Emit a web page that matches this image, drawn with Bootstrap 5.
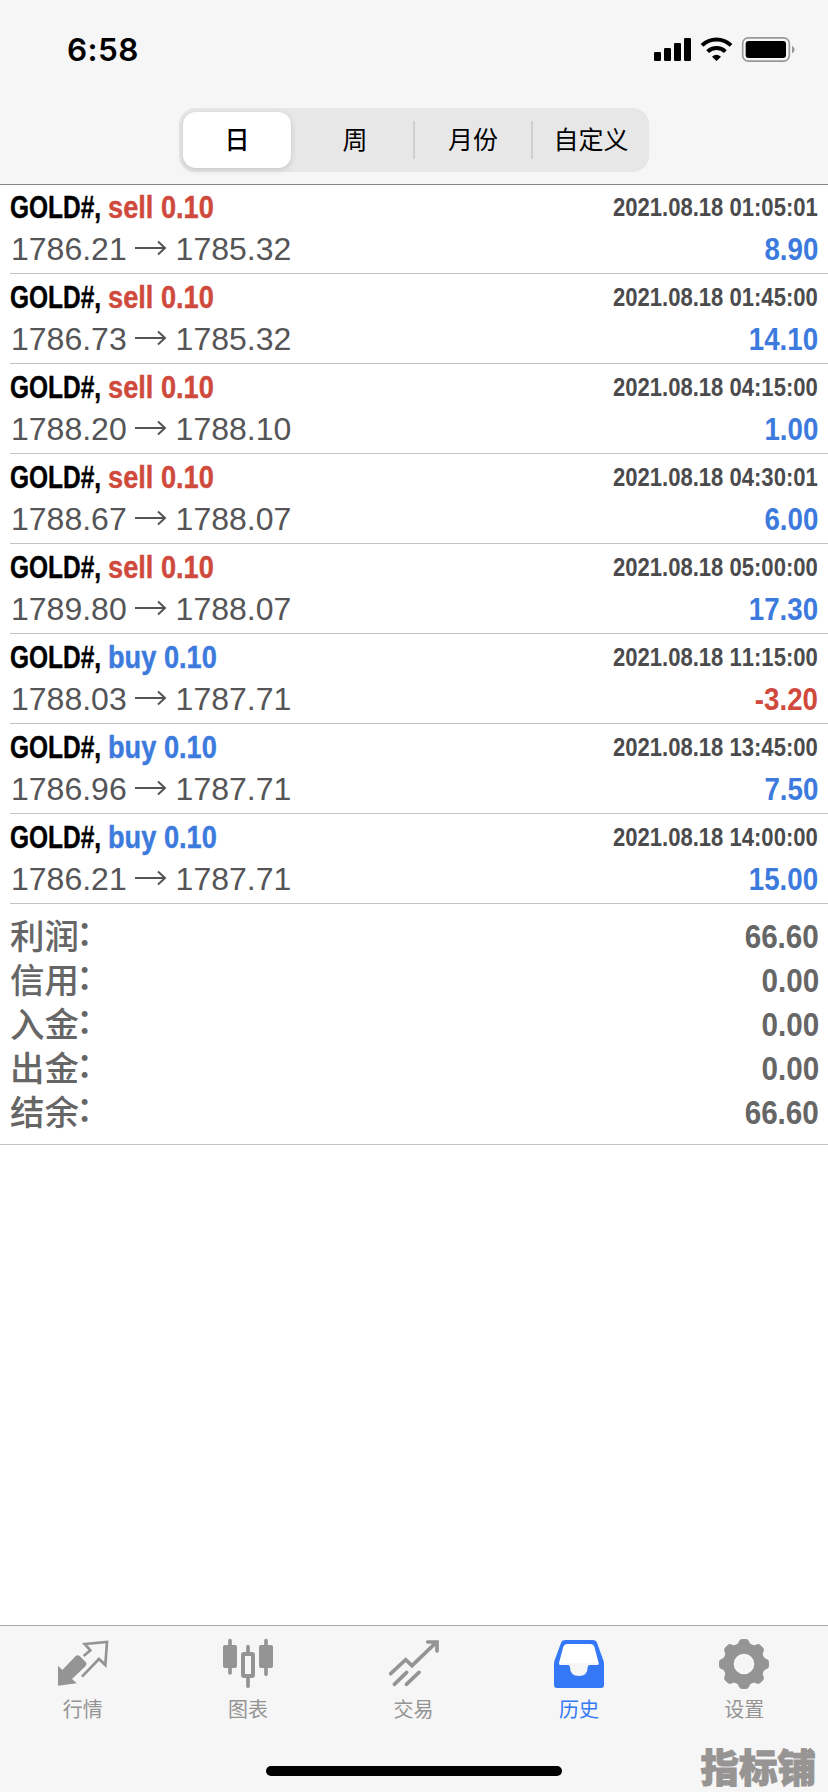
<!DOCTYPE html>
<html lang="zh-CN">
<head>
<meta charset="utf-8">
<meta name="viewport" content="width=device-width, initial-scale=1">
<title>历史</title>
<link href="https://cdn.jsdelivr.net/npm/bootstrap@5.3.0/dist/css/bootstrap.min.css" rel="stylesheet">
<style>
  body { font-family: "Liberation Sans", "Noto Sans CJK SC", sans-serif; height: 1792px; background: #fff; color: #000; overflow: hidden; }
  .bar-bg { background: #f6f6f6; }
  .top-area { height: 185px; border-bottom: 1px solid #858585; }
  .status-row { height: 108px; padding: 0 34px 0 67px; }
  .clock { font: 600 31.5px/40px Inter, sans-serif; margin-top: 30px; letter-spacing: .4px; }
  .status-icons { margin-top: 35px; width: 146px; height: 30px; }
  .seg { width: 470px; height: 64px; border-radius: 16px; background: #e7e7e8; }
  .seg-item { width: 118px; font: 400 25px/61px "Noto Sans CJK SC", sans-serif; color: #000; }
  .seg-item:last-child { width: 116px; }
  .seg-item.active { width: 108px; height: 56px; margin: 4px 6px 4px 4px; line-height: 53px; border-radius: 13px; background: #fff; font-weight: 500; box-shadow: 0 2px 6px rgba(0,0,0,.14); }
  .seg-item.divided { border-right: 2px solid transparent; border-image: linear-gradient(transparent 14px, #d0d0d2 14px, #d0d0d2 50px, transparent 50px) 1; }
  .deal { height: 90px; margin-left: 10px; padding-right: 10px; padding-top: 1px; border-bottom: 1px solid #c3c3c5; }
  .deal:first-child { height: 89px; padding-top: 0; }
  .line-one { height: 43px; padding-top: 1px; }
  .line-two { height: 41px; }
  .nw { display: inline-block; white-space: pre; transform-origin: 0 50%; }
  .nw-end { transform-origin: 100% 50%; }
  .title-txt { font: 700 32px/43px "Liberation Sans", sans-serif; -webkit-text-stroke: .4px currentColor; }
  .sym { width: 98px; }
  .sym .nw { transform: scaleX(.765); }
  .side .nw { transform: scaleX(.85); }
  .stamp { font: 700 25.5px/43px "Liberation Sans", sans-serif; color: #4b4b4d; transform: scaleX(.865); font-kerning: none; }
  .price { font: 400 32px/42px "Liberation Sans", sans-serif; color: #555557; font-kerning: none; padding-left: 1px; }
  .price span { width: 115.6px; }
  .gain { font: 700 32px/42px "Liberation Sans", sans-serif; transform: scaleX(.865); }
  .c-blue { color: #3c7add; }
  .c-red { color: #cf4a3c; }
  .totals { height: 241px; padding: 8px 9px 0 10px; border-bottom: 1px solid #c3c3c5; color: #666; }
  .totals .sum-row { height: 44px; }
  .sum-label { font: 500 34.5px/44px "Noto Sans CJK SC", sans-serif; }
  .sum-colon { display: inline-block; transform: translate(-3px, -4px); }
  .sum-val { font: 700 33.5px/49px "Liberation Sans", sans-serif; transform: scaleX(.885); }
  .tabs-area { height: 167px; border-top: 1px solid #a9a9a9; }
  .tab-strip { padding-right: 1px; }
  .tab-link { color: #949494; font: 400 20px/28px "Noto Sans CJK SC", sans-serif; padding-top: 11px; text-decoration: none; }
  .tab-link.active { color: #3478f6; }
  .tab-link svg { width: 54px; height: 54px; margin-bottom: 4px; }
  .home-pill { width: 296px; height: 10px; border-radius: 5px; background: #000; left: 266px; top: 140px; }
  .brand-mark { right: 12px; top: 114px; font: 900 38.5px/50px "Noto Sans CJK SC", sans-serif; color: #979494; -webkit-text-stroke: 1px #979494; }
</style>
</head>
<body class="d-flex flex-column">
<header class="top-area bar-bg flex-shrink-0">
  <div class="status-row d-flex justify-content-between align-items-start">
    <div class="clock">6:58</div>
    <svg class="status-icons" viewBox="699 105 438 90" overflow="visible" aria-hidden="true">
      <g><rect x="717" y="156" width="21" height="27" rx="4"/><rect x="747" y="144" width="21" height="39" rx="4"/><rect x="777" y="129" width="21" height="54" rx="4"/><rect x="807" y="114" width="21" height="69" rx="4"/></g>
      <g fill="none" stroke="#000" stroke-width="12"><path d="M861 136a62 62 0 0 1 87 0"/><path d="M878 155a38 38 0 0 1 53 0"/></g>
      <path d="M891 170q13-12 27 0l-13.500 13z"/>
      <rect x="983" y="113.500" width="140" height="70" rx="17" fill="none" stroke="#999" stroke-width="5"/>
      <rect x="992" y="123" width="121" height="51" rx="9"/>
      <path d="M1131 137q8 4 8 11.500t-8 11.500z" fill="#999"/>
    </svg>
  </div>
  <div class="seg d-flex mx-auto text-center">
    <div class="seg-item active">日</div>
    <div class="seg-item divided">周</div>
    <div class="seg-item divided">月份</div>
    <div class="seg-item">自定义</div>
  </div>
</header>

<main class="flex-grow-1">
  <div class="deals" id="deals"></div>
  <section class="totals" id="totals"></section>
</main>

<footer class="tabs-area bar-bg flex-shrink-0 position-relative">
  <nav class="tab-strip d-flex text-center">
    <a class="tab-link flex-fill w-100 d-flex flex-column align-items-center">
      <svg viewBox="75 81 162 162"><path d="M81 167L94 180L134 138Q140 133 146 138L165 157Q169 162 164 168L123 207L137 220L81 227z" fill="currentColor"/><path d="M158 138L178 121L161 102L228 96L223 165L204 147L153 200" fill="none" stroke="currentColor" stroke-width="8"/></svg>行情</a>
    <a class="tab-link flex-fill w-100 d-flex flex-column align-items-center">
      <svg viewBox="573 81 162 162" fill="none" stroke="currentColor" stroke-linecap="round"><path d="M600 92v97M708 92v101M654 110v20M654 200v29" stroke-width="11"/><rect x="579" y="105" width="42" height="69" rx="6" fill="currentColor" stroke="none"/><rect x="687" y="105" width="42" height="69" rx="6" fill="currentColor" stroke="none"/><rect x="639" y="132" width="30" height="66" rx="3" stroke-width="12"/></svg>图表</a>
    <a class="tab-link flex-fill w-100 d-flex flex-column align-items-center">
      <svg viewBox="79 81 162 162" fill="none" stroke="currentColor" stroke-width="11" stroke-linecap="round"><path d="M90 191L135 149L154 167L226 98M101 223L138 187M137 223L175 187"/><path d="M201 96h28v27"/></svg>交易</a>
    <a class="tab-link active flex-fill w-100 d-flex flex-column align-items-center">
      <svg viewBox="573 81 162 162"><path d="M606 98H700L718 160H590z" fill="#fff"/><path fill-rule="evenodd" fill="currentColor" d="M613 90H695Q705 90 708 98L727 151Q729 156 729 162V225Q729 234 720 234H588Q579 234 579 225V162Q579 156 581 151L600 98Q603 90 613 90zM618 102Q610 102 607 110L594 159Q593 165 598 165H620Q627 165 627 172Q627 198 654 198Q680 198 680 172Q680 165 687 165H709Q715 165 713 159L700 110Q697 102 689 102z"/></svg>历史</a>
    <a class="tab-link flex-fill w-100 d-flex flex-column align-items-center">
      <svg viewBox="171 81 162 162"><g fill="currentColor"><circle cx="252" cy="162" r="47" fill="none" stroke="currentColor" stroke-width="32"/><g id="teeth"></g></g></svg>设置</a>
  </nav>
  <div class="home-pill position-absolute"></div>
  <div class="brand-mark position-absolute">指标铺</div>
</footer>

<script>
  const deals = [
    ['sell', '1786.21', '1785.32', '01:05:01', '8.90'],
    ['sell', '1786.73', '1785.32', '01:45:00', '14.10'],
    ['sell', '1788.20', '1788.10', '04:15:00', '1.00'],
    ['sell', '1788.67', '1788.07', '04:30:01', '6.00'],
    ['sell', '1789.80', '1788.07', '05:00:00', '17.30'],
    ['buy', '1788.03', '1787.71', '11:15:00', '-3.20'],
    ['buy', '1786.96', '1787.71', '13:45:00', '7.50'],
    ['buy', '1786.21', '1787.71', '14:00:00', '15.00']
  ];
  document.getElementById('deals').innerHTML = deals.map(([side, open, close, time, gain]) => `
    <div class="deal">
      <div class="line-one d-flex justify-content-between">
        <div class="title-txt d-flex"><div class="sym"><span class="nw">GOLD#,</span></div><div class="side ${side === 'sell' ? 'c-red' : 'c-blue'}"><span class="nw">${side} 0.10</span></div></div>
        <div class="nw nw-end stamp">2021.08.18 ${time}</div>
      </div>
      <div class="line-two d-flex justify-content-between">
        <div class="price d-flex align-items-center"><span>${open}</span>
          <svg width="49" height="20" viewBox="0 0 49 20" fill="none" stroke="currentColor" stroke-width="2"><path d="M8 9H38M31 2.500L38 9L31 15.500"/></svg>
          <span>${close}</span></div>
        <div class="nw nw-end gain ${gain[0] === '-' ? 'c-red' : 'c-blue'}">${gain}</div>
      </div>
    </div>`).join('');

  const totals = [['利润', '66.60'], ['信用', '0.00'], ['入金', '0.00'], ['出金', '0.00'], ['结余', '66.60']];
  document.getElementById('totals').innerHTML = totals.map(([label, value]) => `
    <div class="sum-row d-flex justify-content-between"><div class="sum-label">${label}<span class="sum-colon">：</span></div><div class="nw nw-end sum-val">${value}</div></div>`).join('');

  // eight rounded gear teeth around the hub
  document.getElementById('teeth').innerHTML = [0, 45, 90, 135, 180, 225, 270, 315].map(a =>
    `<path transform="rotate(${a} 252 162)" d="M228 106Q234 103 237 94Q240 87 247 87H257Q264 87 267 94Q270 103 276 106z"/>`).join('');
</script>
<script src="https://cdn.jsdelivr.net/npm/bootstrap@5.3.0/dist/js/bootstrap.bundle.min.js"></script>
</body>
</html>
